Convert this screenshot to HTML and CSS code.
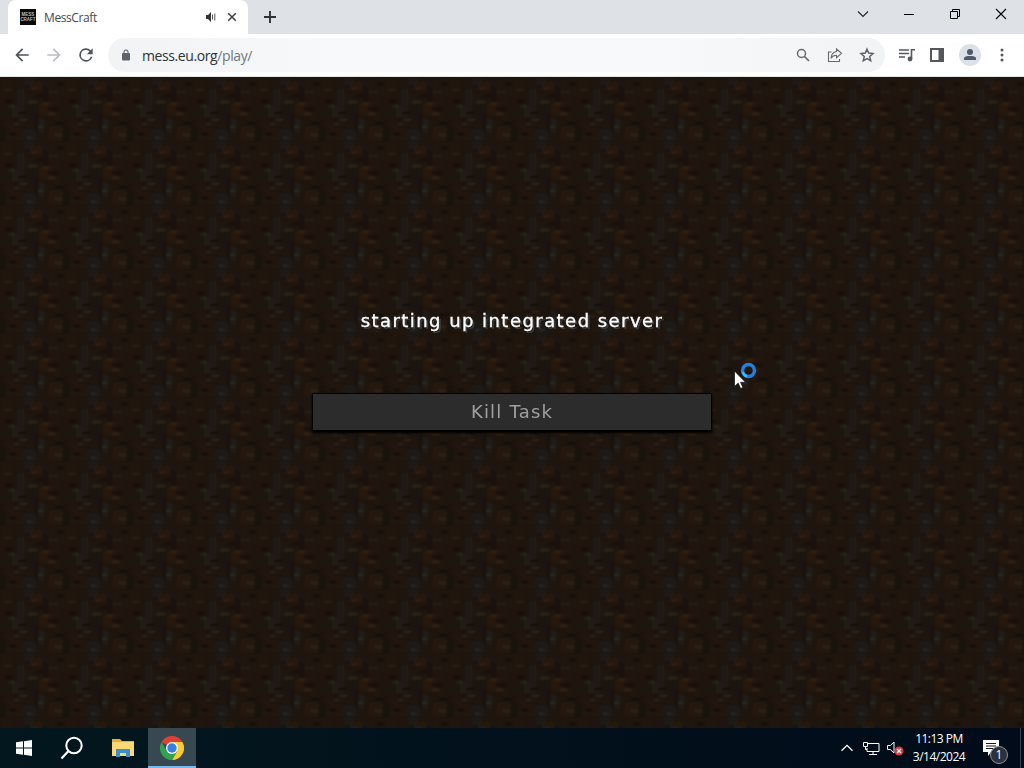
FILE: index.html
```html
<!DOCTYPE html>
<html lang="en">
<head>
  <meta charset="UTF-8"/>
  <title>MessCraft</title>
  <link rel="stylesheet" href="styles.css">
</head>
<body>
  <header class="tabs">
    <div class="tab">
      <div class="favicon">MESS<br/>CRAFT</div>
      <span class="tab-title">MessCraft</span>
      <svg class="sound" width="12" height="12" viewBox="0 0 12 12"><path d="M1 4h2l3-3v10L3 8H1z" fill="#333"/><path d="M7.5 3.5v5M9.8 2.5v7" stroke="#555" fill="none"/></svg>
      <svg width="10" height="10" viewBox="0 0 10 10"><path d="M1.2 1.2l7.6 7.6M8.8 1.2L1.2 8.8" stroke="#3c4043" stroke-width="1.5"/></svg>
    </div>
    <svg class="new-tab" width="12" height="12" viewBox="0 0 12 12"><path d="M6 0v12M0 6h12" stroke="#303336" stroke-width="1.9"/></svg>
    <div class="window-buttons">
      <svg width="12" height="12" viewBox="0 0 12 12"><path d="M1 3.5l5 5 5-5" fill="none" stroke="#222" stroke-width="1.1"/></svg>
      <svg width="12" height="12" viewBox="0 0 12 12"><path d="M1 6.5h10" stroke="#000"/></svg>
      <svg width="12" height="12" viewBox="0 0 12 12"><path d="M1.5 3.5h7v7h-7zM3.5 3.5v-2h7v7h-2" fill="none" stroke="#000"/></svg>
      <svg width="12" height="12" viewBox="0 0 12 12"><path d="M1 1l10 10M11 1L1 11" stroke="#000" stroke-width="1.1"/></svg>
    </div>
  </header>
  <nav class="toolbar">
    <svg width="20" height="20" viewBox="0 0 24 24"><path d="M20 11H7.8l5.6-5.6L12 4l-8 8 8 8 1.4-1.4L7.8 13H20z" fill="#505458"/></svg>
    <svg width="20" height="20" viewBox="0 0 24 24"><path d="M12 4l-1.4 1.4 5.6 5.6H4v2h12.2l-5.6 5.6L12 20l8-8z" fill="#bbbdc0"/></svg>
    <svg width="20" height="20" viewBox="0 0 24 24"><path d="M17.65 6.35A8 8 0 1 0 19.73 14h-2.08A6 6 0 1 1 12 6c1.66 0 3.14.69 4.22 1.78L13 11h7V4z" fill="#505458"/></svg>
    <div class="address">
      <svg width="12" height="12" viewBox="0 0 24 24"><path d="M18 8h-1V6A5 5 0 0 0 7 6v2H6a2 2 0 0 0-2 2v11a2 2 0 0 0 2 2h12a2 2 0 0 0 2-2V10a2 2 0 0 0-2-2zM9 6a3 3 0 0 1 6 0v2H9z" fill="#5f6368"/></svg>
      <span class="url">mess.eu.org<span class="path">/play/</span></span>
      <svg width="16" height="16" viewBox="0 0 16 16"><circle cx="6.5" cy="6.5" r="4" fill="none" stroke="#66696d" stroke-width="1.5"/><path d="M9.5 9.5l4.5 4.5" stroke="#66696d" stroke-width="1.7"/></svg>
      <svg width="16" height="16" viewBox="0 0 16 16"><path d="M4.5 5H1.500v9.500h11V12M9.500 2l5 4.300-5 4.400V8.300C7 8.300 5.200 9.200 4 11.200 4.300 7.500 6 5 9.500 4.500z" fill="none" stroke="#66696d" stroke-width="1.1"/></svg>
      <svg width="16" height="16" viewBox="0 0 16 16"><path d="M8 2.200l1.700 3.900 4.300.4-3.300 2.900 1 4.300L8 11.500l-3.700 2.200 1-4.300L2 6.500l4.300-.4z" fill="none" stroke="#5f6368" stroke-width="1.500"/></svg>
    </div>
    <div class="actions">
      <svg width="18" height="16" viewBox="0 0 18 16"><path d="M1 3h10M1 6.500h10M1 10h6" stroke="#54585c" stroke-width="1.600"/><path d="M13.500 12V2.800H17" fill="none" stroke="#54585c" stroke-width="1.600"/><circle cx="12" cy="12" r="2.400" fill="#54585c"/></svg>
      <svg width="16" height="16" viewBox="0 0 16 16"><path d="M1 1h14v14H1zM3 3v10h6.500V3z" fill="#54585c" fill-rule="evenodd"/></svg>
      <svg width="22" height="22" viewBox="0 0 22 22"><circle cx="11" cy="11" r="11" fill="#dce0e7"/><circle cx="11" cy="8" r="3" fill="#505a68"/><path d="M5 16v-1.500C5 12.500 8 12 11 12s6 .5 6 2.500V16z" fill="#505a68"/></svg>
      <svg width="16" height="16" viewBox="0 0 16 16"><g fill="#54585c"><circle cx="8" cy="3" r="1.500"/><circle cx="8" cy="8" r="1.500"/><circle cx="8" cy="13" r="1.500"/></g></svg>
    </div>
  </nav>
  <main class="game">
    <canvas class="dirt" id="dirt" width="1024" height="651"></canvas>
    <h1 class="status">starting up integrated server</h1>
    <button class="kill" type="button">Kill Task</button>
    <svg class="cursor" width="24" height="28" viewBox="0 0 24 28"><circle cx="14.500" cy="8.500" r="6" fill="none" stroke="#2380d8" stroke-width="3.400"/><path d="M8.700 10A6 6 0 0 0 13 14.300" fill="none" stroke="#45b5f0" stroke-width="2.500"/><path d="M.5 9v15.500l3.700-3.400 2.400 5.400 2.300-1-2.300-5.200h4.900z" fill="#fff" stroke="#111" stroke-width=".7"/></svg>
  </main>
  <footer class="taskbar">
    <div class="task"><svg width="16" height="16" viewBox="0 0 16 16"><path d="M0 2.300l7-1v6.200H0zM8 1.200L16 0v7.500H8zM0 8.500h7v6.200l-7-1zM8 8.500h8V16l-8-1.200z" fill="#fff"/></svg></div>
    <div class="task"><svg width="24" height="24" viewBox="0 0 24 24"><circle cx="14" cy="9.500" r="7.700" fill="none" stroke="#fff" stroke-width="2"/><path d="M8.500 15l-7 7.500" stroke="#fff" stroke-width="2.200"/></svg></div>
    <div class="task files"><svg width="22" height="20" viewBox="0 0 22 20"><path d="M0 1h8l2 2h12v15H0z" fill="#e8ae35"/><path d="M0 4h22v14H0z" fill="#fbd775"/><path d="M4 11h14v8h-4v-4H8v4H4z" fill="#3c8ec7"/></svg></div>
    <div class="task active"><svg width="24" height="24" viewBox="0 0 24 24"><path d="M12 12L1.600 6A12 12 0 0 1 22.400 6z" fill="#df4130"/><path d="M12 12V6h10.400A12 12 0 0 1 12 24l5.200-9z" fill="#fbcb34"/><path d="M1.600 6A12 12 0 0 0 12 24l5.200-9L12 12l-5.200 3z" fill="#31a350"/><circle cx="12" cy="12" r="6" fill="#fff"/><circle cx="12" cy="12" r="4.700" fill="#367fe3"/></svg></div>
    <div class="tray">
      <svg width="12" height="8" viewBox="0 0 12 8"><path d="M.5 6.800L6 1.300l5.500 5.500" fill="none" stroke="#fff" stroke-width="1.300"/></svg>
      <svg width="17" height="15" viewBox="0 0 17 15"><path d="M5 2.500h11v8H4V7M10 10.500v3M6 13.500h8M.5 1.500h4v4h-4zM2.500 5.500v3H4" fill="none" stroke="#fff"/></svg>
      <svg class="volume" width="17" height="16" viewBox="0 0 17 16"><path d="M.5 5.500h2.800L7 2v11L3.300 9.500H.5z" fill="none" stroke="#fff"/><circle cx="12" cy="11" r="4.500" fill="#d53b40"/><path d="M10 9l4 4M14 9l-4 4" stroke="#fff" stroke-width="1.200"/></svg>
      <div class="clock">11:13 PM<br/>3/14/2024</div>
      <div class="notice"><svg width="16" height="16" viewBox="0 0 16 16"><path d="M0 0h16v12H8l-3 4v-4H0z" fill="#fff"/><path d="M3 3.500h10M3 6h10M3 8.500h7" stroke="#111a25"/></svg><span class="badge">1</span></div>
    </div>
  </footer>
  <script src="script.js"></script>
</body>
</html>
```
FILE: styles.css
```css
body{margin:0;width:1024px;height:768px;overflow:hidden;display:flex;flex-direction:column;font-family:"Open Sans","Noto Sans",sans-serif;}
svg{display:block;flex-shrink:0;}
.tabs{height:34px;background:#dee1e6;display:flex;align-items:center;}
.tab{width:240px;height:34px;margin-left:8px;padding:0 11px 0 12px;box-sizing:border-box;background:#fff;border-radius:8px 8px 0 0;display:flex;align-items:center;}
.favicon{width:16px;height:16px;background:#090909;color:#bbb;font:bold 4.5px/5px "Liberation Sans",sans-serif;text-align:center;padding-top:3px;box-sizing:border-box;}
.tab-title{font-size:12px;letter-spacing:-.4px;color:#45494d;margin-left:8px;}
.sound{margin-left:auto;margin-right:10px;}
.new-tab{margin-left:16px;}
.window-buttons{margin-left:auto;margin-right:17px;margin-bottom:6px;display:flex;gap:34px;}
.toolbar{height:43px;background:#fff;border-bottom:1px solid #e5e5e5;box-sizing:border-box;padding:0 14px 0 12px;display:flex;align-items:center;gap:12px;}
.address{flex:1;height:34px;border-radius:17px;background:linear-gradient(90deg,#f1f3f4,#f8f9fa 30%,#f8f9fa 70%,#f1f3f4);padding:0 10px 0 12px;display:flex;align-items:center;gap:16px;box-sizing:border-box;}
.url{flex:1;margin-left:-6px;font-size:14px;letter-spacing:-.4px;color:#303337;}
.path{color:#73777b;}
.actions{display:flex;align-items:center;gap:13.500px;margin-left:1px;}
.game{flex:1;position:relative;display:flex;flex-direction:column;align-items:center;background:#1c130d;}
.dirt{position:absolute;inset:0;}
.status{position:relative;margin:231px 0 0;height:26px;font:18px/26px "DejaVu Sans",sans-serif;letter-spacing:1.45px;color:#fff;-webkit-text-stroke:.35px #fff;text-shadow:2px 2px 0 #3b3b3b;white-space:nowrap;}
.kill{position:relative;margin-top:59px;width:400px;height:39px;padding:0;background:#2c2c2c;border:1px solid #000;border-width:1px 1px 2px;box-shadow:0 1px 2px #000;color:#a0a0a0;font:18px/36px "DejaVu Sans",sans-serif;letter-spacing:1.2px;}
.cursor{position:absolute;left:734px;top:285px;}
.taskbar{height:40px;background:linear-gradient(90deg,#03171e,#010b19);display:flex;}
.task{width:48px;display:flex;align-items:center;justify-content:center;}
.files{margin:0 1px 0 3px;}
.active{background:#384850;box-shadow:inset 0 -2px #76b9ed;}
.tray{margin-left:auto;display:flex;align-items:center;padding-right:12px;border-right:1px solid #38424c;margin-right:3px;gap:10px;color:#fff;}
.volume{margin-left:-3px;}
.clock{width:58px;margin-left:-4px;text-align:center;font-size:12px;line-height:18px;letter-spacing:-.5px;}
.notice{position:relative;width:26px;padding-left:5px;margin-right:-1px;}
.badge{position:absolute;left:12px;top:6px;width:16px;height:16px;border:1px solid #8a9098;border-radius:50%;background:#2b323b;font-size:12px;line-height:16px;text-align:center;}
```
FILE: script.js
```js
// one 64px dirt tile: x, y, width, height, colour
const patches = [
  [0, 0, 14, 26, "#21160d"], [15, 0, 16, 28, "#1d1612"], [30, 4, 12, 10, "#2b1b0e"], [47, 3, 17, 17, "#20170f"],
  [0, 27, 17, 18, "#1e150e"], [12, 28, 12, 12, "#26201d"], [39, 25, 13, 13, "#2d1c0d"], [50, 19, 10, 12, "#21160f"],
  [5, 45, 18, 19, "#22180f"], [23, 52, 14, 12, "#1b1e1e"], [38, 41, 7, 15, "#222223"], [48, 50, 14, 13, "#2b1b0e"],
  [24, 0, 11, 8, "#1c1e1d"], [17, 12, 8, 16, "#241d1c"], [28, 30, 8, 15, "#1a1413"], [0, 51, 5, 13, "#160f0b"],
  [44, 10, 4, 14, "#140e0a"], [35, 37, 3, 17, "#130e0b"],
  [28, 24, 9, 2, "#35302a"], [9, 28, 6, 2, "#302b25"], [20, 42, 7, 2, "#34291d"], [14, 46, 5, 2, "#332719"],
  [48, 36, 8, 2, "#372817"], [42, 26, 7, 2, "#352515"], [55, 57, 7, 2, "#34281b"], [31, 10, 6, 2, "#302017"],
  [38, 49, 5, 2, "#2f3233"], [27, 60, 5, 2, "#2b3030"], [4, 12, 8, 2, "#2b2015"], [49, 14, 8, 2, "#2e2318"],
  [55, 45, 9, 2, "#0d0907"], [57, 6, 7, 2, "#0c0806"], [19, 35, 8, 2, "#0e0907"], [5, 23, 8, 2, "#100b08"],
  [48, 31, 9, 2, "#0f0a07"], [9, 56, 7, 2, "#100b08"], [36, 18, 7, 2, "#100b08"]
];
const tile = document.createElement("canvas");
tile.width = tile.height = 64;
const t = tile.getContext("2d");
t.fillStyle = "#1e150e";
t.fillRect(0, 0, 64, 64);
t.filter = "blur(1.2px)";
patches.forEach(([x, y, w, h, color]) => {
  t.fillStyle = color;
  t.globalAlpha = h > 2 ? 0.5 : 0.85;
  // draw the wrapped copies too so that the edges join
  for (const dx of [-64, 0, 64]) for (const dy of [-64, 0, 64]) t.fillRect(x + dx, y + dy, w, h);
});
const ctx = document.getElementById("dirt").getContext("2d");
ctx.fillStyle = ctx.createPattern(tile, "repeat");
ctx.fillRect(0, 0, 1024, 651);
```
